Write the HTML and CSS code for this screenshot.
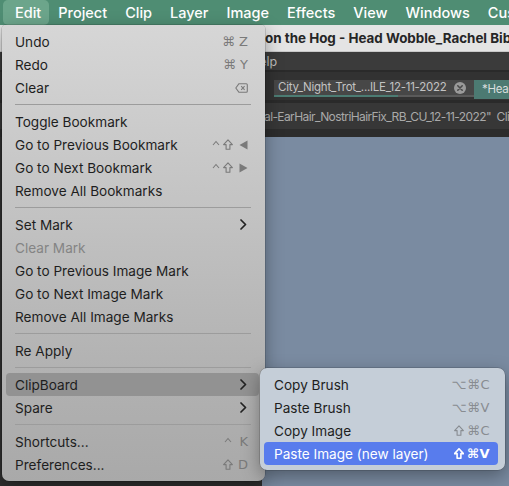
FILE: index.html
```html
<!DOCTYPE html>
<html>
<head>
<meta charset="utf-8">
<link rel="stylesheet" href="styles.css">
</head>
<body>
<div class="app">
  <nav class="menubar">
    <span class="mb-item active">Edit</span>
    <span class="mb-item">Project</span>
    <span class="mb-item">Clip</span>
    <span class="mb-item">Layer</span>
    <span class="mb-item">Image</span>
    <span class="mb-item">Effects</span>
    <span class="mb-item">View</span>
    <span class="mb-item">Windows</span>
    <span class="mb-item">Custom</span>
  </nav>
  <div class="titlebar"><span class="title">on the Hog - Head Wobble_Rachel Bibb</span></div>
  <div class="appmenu"><span>Help</span></div>
  <div class="tabrow">
    <div class="tab">
      <span class="tab-text">City_Night_Trot_...ILE_12-11-2022</span>
      <span class="tab-close"><svg width="12" height="12" viewBox="0 0 12 12"><circle cx="6" cy="6" r="6" fill="#9a9a9a"/><path d="M3.8 3.8 L8.2 8.2 M8.2 3.8 L3.8 8.2" stroke="#4a4a4a" stroke-width="1.6" stroke-linecap="round"/></svg></span>
    </div>
    <div class="tab tab-active"><span class="tab-text">*Head Wobble</span></div>
  </div>
  <div class="infobar"><span>al-EarHair_NostriHairFix_RB_CU_12-11-2022"&nbsp;&nbsp;Clip</span></div>
  <div class="workspace">
    <div class="sidepanel"></div>
    <div class="canvas"></div>
  </div>

  <div class="menu edit-menu">
    <div class="item"><span>Undo</span><span class="sc">⌘ Z</span></div>
    <div class="item"><span>Redo</span><span class="sc">⌘ Y</span></div>
    <div class="item"><span>Clear</span><span class="sc"><svg width="13" height="10" viewBox="0 0 13 10"><path d="M4 0.7 H11.3 Q12.3 0.7 12.3 1.7 V8.3 Q12.3 9.3 11.3 9.3 H4 L0.8 5 Z" fill="none" stroke="#7a7a7a" stroke-width="1.1" stroke-linejoin="round"/><path d="M6.2 3.2 L9.6 6.8 M9.6 3.2 L6.2 6.8" stroke="#7a7a7a" stroke-width="1.1"/></svg></span></div>
    <div class="sep"></div>
    <div class="item"><span>Toggle Bookmark</span></div>
    <div class="item"><span>Go to Previous Bookmark</span><span class="sc"><svg class="caret" width="8" height="6" viewBox="0 0 8 6"><path d="M1 5 L4 1.5 L7 5" fill="none" stroke="#7a7a7a" stroke-width="1.1"/></svg><svg class="shift" width="10" height="11" viewBox="0 0 10 11"><path d="M5 0.8 L9.4 5.6 H6.9 V10.2 H3.1 V5.6 H0.6 Z" fill="none" stroke="#7a7a7a" stroke-width="1.1" stroke-linejoin="round"/></svg><svg class="tri" width="9" height="10" viewBox="0 0 9 10"><path d="M8.5 0.5 V9.5 L0.5 5 Z" fill="#7a7a7a"/></svg></span></div>
    <div class="item"><span>Go to Next Bookmark</span><span class="sc"><svg class="caret" width="8" height="6" viewBox="0 0 8 6"><path d="M1 5 L4 1.5 L7 5" fill="none" stroke="#7a7a7a" stroke-width="1.1"/></svg><svg class="shift" width="10" height="11" viewBox="0 0 10 11"><path d="M5 0.8 L9.4 5.6 H6.9 V10.2 H3.1 V5.6 H0.6 Z" fill="none" stroke="#7a7a7a" stroke-width="1.1" stroke-linejoin="round"/></svg><svg class="tri" width="9" height="10" viewBox="0 0 9 10"><path d="M0.5 0.5 V9.5 L8.5 5 Z" fill="#7a7a7a"/></svg></span></div>
    <div class="item"><span>Remove All Bookmarks</span></div>
    <div class="sep"></div>
    <div class="item"><span>Set Mark</span><span class="chev"><svg width="7" height="11" viewBox="0 0 7 11"><path d="M1 1 L5.5 5.5 L1 10" fill="none" stroke="#222" stroke-width="1.7" stroke-linecap="round" stroke-linejoin="round"/></svg></span></div>
    <div class="item disabled"><span>Clear Mark</span></div>
    <div class="item"><span>Go to Previous Image Mark</span></div>
    <div class="item"><span>Go to Next Image Mark</span></div>
    <div class="item"><span>Remove All Image Marks</span></div>
    <div class="sep"></div>
    <div class="item"><span>Re Apply</span></div>
    <div class="sep"></div>
    <div class="item hover"><span>ClipBoard</span><span class="chev"><svg width="7" height="11" viewBox="0 0 7 11"><path d="M1 1 L5.5 5.5 L1 10" fill="none" stroke="#222" stroke-width="1.7" stroke-linecap="round" stroke-linejoin="round"/></svg></span></div>
    <div class="item"><span>Spare</span><span class="chev"><svg width="7" height="11" viewBox="0 0 7 11"><path d="M1 1 L5.5 5.5 L1 10" fill="none" stroke="#222" stroke-width="1.7" stroke-linecap="round" stroke-linejoin="round"/></svg></span></div>
    <div class="sep"></div>
    <div class="item"><span>Shortcuts...</span><span class="sc"><svg class="caret" width="8" height="6" viewBox="0 0 8 6"><path d="M1 5 L4 1.5 L7 5" fill="none" stroke="#7a7a7a" stroke-width="1.1"/></svg>&nbsp;K</span></div>
    <div class="item"><span>Preferences...</span><span class="sc"><svg class="shift" width="10" height="11" viewBox="0 0 10 11"><path d="M5 0.8 L9.4 5.6 H6.9 V10.2 H3.1 V5.6 H0.6 Z" fill="none" stroke="#7a7a7a" stroke-width="1.1" stroke-linejoin="round"/></svg>&nbsp;D</span></div>
  </div>

  <div class="menu sub-menu">
    <div class="item"><span>Copy Brush</span><span class="sc">⌥⌘C</span></div>
    <div class="item"><span>Paste Brush</span><span class="sc">⌥⌘V</span></div>
    <div class="item"><span>Copy Image</span><span class="sc"><svg class="shift" width="10" height="11" viewBox="0 0 10 11"><path d="M5 0.8 L9.4 5.6 H6.9 V10.2 H3.1 V5.6 H0.6 Z" fill="none" stroke="#888c91" stroke-width="1.1" stroke-linejoin="round"/></svg>⌘C</span></div>
    <div class="item selected"><span>Paste Image (new layer)</span><span class="sc"><svg class="shift" width="10" height="11" viewBox="0 0 10 11"><path d="M5 0.8 L9.4 5.6 H6.9 V10.2 H3.1 V5.6 H0.6 Z" fill="none" stroke="#fff" stroke-width="1.6" stroke-linejoin="round"/></svg>⌘V</span></div>
  </div>
</div>
</body>
</html>
```

FILE: styles.css
```css
* { box-sizing: border-box; }
html, body { margin: 0; padding: 0; }
body {
  width: 509px;
  height: 486px;
  overflow: hidden;
  font-family: Inter, "DejaVu Sans", sans-serif;
  background: #2d2d2d;
}
.app {
  position: relative;
  width: 509px;
  height: 486px;
  display: flex;
  flex-direction: column;
  overflow: hidden;
}
.menubar {
  height: 25px;
  flex: none;
  background: #4f8d73;
  display: flex;
  align-items: stretch;
  padding-left: 3px;
  white-space: nowrap;
}
.mb-item {
  color: #fff;
  font-size: 14.5px;
  font-weight: 500;
  padding: 0 9px;
  display: flex;
  align-items: center;
  border-radius: 5px;
}
.mb-item.active {
  padding-left: 12px;
  padding-right: 8px;
  background: #6ca58b;
}
.titlebar {
  height: 27px;
  flex: none;
  background: #e4e4e4;
  display: flex;
  align-items: center;
  white-space: nowrap;
  border-bottom: 1px solid #c8c8c8;
}
.title {
  padding-left: 265px;
  font-size: 13.4px;
  font-weight: 700;
  color: #262626;
}
.appmenu {
  height: 20px;
  flex: none;
  background: #3b3b3b;
  display: flex;
  align-items: center;
  border-bottom: 2px solid #2a2a2a;
}
.appmenu span {
  padding-left: 250px;
  font-size: 12.5px;
  color: #bdbdbd;
}
.tabrow {
  height: 31px;
  flex: none;
  background: #323232;
  display: flex;
  align-items: flex-end;
  padding: 0 0 3px 274px;
  border-bottom: 3px solid #2a2a2a;
  white-space: nowrap;
}
.tab {
  height: 17px;
  display: flex;
  align-items: center;
  background: #474747;
  padding-left: 4px;
  flex: none;
}
.tab:first-child {
  width: 200px;
  border-bottom: 2px solid;
  border-image: linear-gradient(90deg, #4c7c73 0 62%, #5a5a5a 62% 100%) 1;
}
.tab-text {
  font-size: 11.5px;
  letter-spacing: -0.25px;
  color: #c3c3c3;
  line-height: 15px;
}
.tab-close {
  margin-left: auto;
  margin-right: 8px;
  display: flex;
}
.tab-active {
  background: #4c7a72;
  padding-left: 8px;
  height: 19px;
  margin-bottom: -2px;
}
.tab-active .tab-text { color: #d8dedd; }
.infobar {
  height: 26px;
  flex: none;
  background: #373737;
  display: flex;
  align-items: center;
  white-space: nowrap;
}
.infobar span {
  padding-left: 264px;
  font-size: 12px;
  letter-spacing: -0.6px;
  color: #a9a9a9;
}
.workspace {
  flex: 1;
  display: flex;
  border-top: 8px solid #2c2c2c;
}
.sidepanel {
  width: 262px;
  flex: none;
  background: #2f2f2f;
}
.canvas {
  flex: 1;
  background: #7a8ba1;
}

/* menus */
.menu {
  position: absolute;
  border-radius: 7px;
  padding: 5px 0;
  box-shadow: 0 6px 18px rgba(0,0,0,0.35), 0 0 0 0.5px rgba(0,0,0,0.25);
  font-size: 13.6px;
  color: #1e1e1e;
}
.edit-menu {
  left: 2px;
  top: 25px;
  width: 263px;
  height: 456px;
  background: linear-gradient(180deg, #d6d6d6 0%, #c3c3c3 40%, #b2b2b2 75%, #a9a9a9 100%);
  border-top-left-radius: 4px;
  border-top-right-radius: 4px;
}
.sub-menu {
  left: 260px;
  top: 368px;
  width: 245px;
  height: 102px;
  background: #c5ced8;
}
.item {
  height: 23px;
  display: flex;
  align-items: center;
  justify-content: space-between;
  padding: 0 17px 0 13px;
  white-space: nowrap;
}
.sep {
  height: 11px;
  margin: 0 14px 0 13px;
  display: flex;
  align-items: center;
}
.sep::before {
  content: "";
  flex: 1;
  height: 1px;
  background: #9c9c9c;
}
.item.hover {
  background: #929292;
  margin: 0 6px 0 4px;
  padding: 0 11px 0 9px;
  border-radius: 4px;
}
.item.disabled { color: #848484; }
.sc {
  color: #7a7a7a;
  display: flex;
  align-items: center;
  font-family: "DejaVu Sans", sans-serif;
  font-size: 13px;
}
.sc .caret { margin-right: 3px; margin-top: -4px; }
.sc .shift { margin-right: 1px; }
.sc .tri { margin-left: 5px; }
.chev { display: flex; align-items: center; margin-right: 1px; }
.sub-menu .item { padding: 0 15px 0 14px; }
.sub-menu .sc { color: #888c91; letter-spacing: 0.5px; }
.sub-menu .sc .shift { margin-right: 3px; }
.item.selected {
  background: #587ced;
  color: #fff;
  margin: 0 7px 0 4px;
  padding: 0 8px 0 10px;
  border-radius: 4px;
}
.item.selected .sc { color: #fff; font-weight: 700; }
```
